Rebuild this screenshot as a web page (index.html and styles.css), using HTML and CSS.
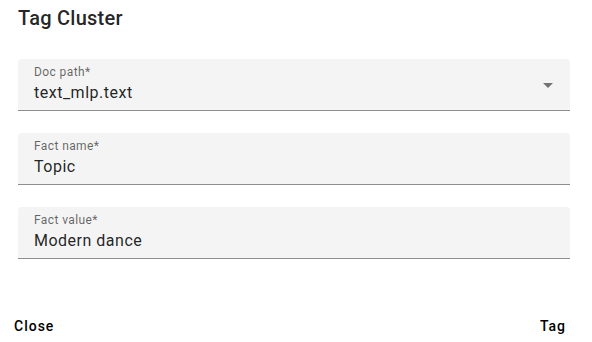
FILE: index.html
```html
<!DOCTYPE html>
<html lang="en">
<head>
<meta charset="utf-8">
<title>Tag Cluster</title>
<link rel="stylesheet" href="styles.css">
</head>
<body>
<div class="dialog">
  <h2 class="dialog-title">Tag Cluster</h2>
  <div class="dialog-content">
    <div class="field field-select">
      <span class="field-label">Doc path*</span>
      <span class="field-value">text_mlp.text</span>
      <span class="select-arrow"></span>
    </div>
    <div class="field">
      <span class="field-label">Fact name*</span>
      <span class="field-value">Topic</span>
    </div>
    <div class="field">
      <span class="field-label">Fact value*</span>
      <span class="field-value">Modern dance</span>
    </div>
  </div>
  <div class="dialog-actions">
    <button class="btn">Close</button>
    <button class="btn">Tag</button>
  </div>
</div>
</body>
</html>
```

FILE: styles.css
```css
html, body {
  margin: 0;
  padding: 0;
  background: #ffffff;
}

body {
  font-family: Roboto, "Liberation Sans", sans-serif;
  color: rgba(0, 0, 0, 0.87);
}

.dialog {
  width: 592px;
  height: 342px;
  display: flex;
  flex-direction: column;
}

.dialog-title {
  margin: 0;
  padding: 2px 0 0 18px;
  font-size: 20px;
  font-weight: 500;
  line-height: 32px;
  letter-spacing: 0.0125em;
  color: rgba(0, 0, 0, 0.87);
}

.dialog-content {
  padding: 25px 22px 0 18px;
  display: flex;
  flex-direction: column;
  gap: 22px;
}

.field {
  position: relative;
  display: flex;
  flex-direction: column;
  box-sizing: border-box;
  height: 52px;
  padding: 5px 16px 0 16px;
  background: #f4f4f4;
  border-radius: 4px 4px 0 0;
  border-bottom: 1px solid #8e8e8e;
}

.field-label {
  font-size: 12px;
  line-height: 16px;
  color: rgba(0, 0, 0, 0.6);
  letter-spacing: 0.4px;
}

.field-value {
  margin-top: 1px;
  font-size: 16px;
  line-height: 24px;
  color: rgba(0, 0, 0, 0.87);
  letter-spacing: 0.5px;
}

.select-arrow {
  position: absolute;
  right: 17px;
  top: 24px;
  width: 0;
  height: 0;
  border-left: 5px solid transparent;
  border-right: 5px solid transparent;
  border-top: 5px solid #737373;
}

.dialog-actions {
  margin-top: 49px;
  display: flex;
  justify-content: space-between;
  padding: 0 18px 0 6px;
}

.btn {
  font-family: Roboto, "Liberation Sans", sans-serif;
  font-size: 14px;
  font-weight: 500;
  letter-spacing: 1px;
  line-height: 36px;
  height: 36px;
  padding: 0 8px;
  border: none;
  background: transparent;
  color: #000000;
  cursor: pointer;
}
```
